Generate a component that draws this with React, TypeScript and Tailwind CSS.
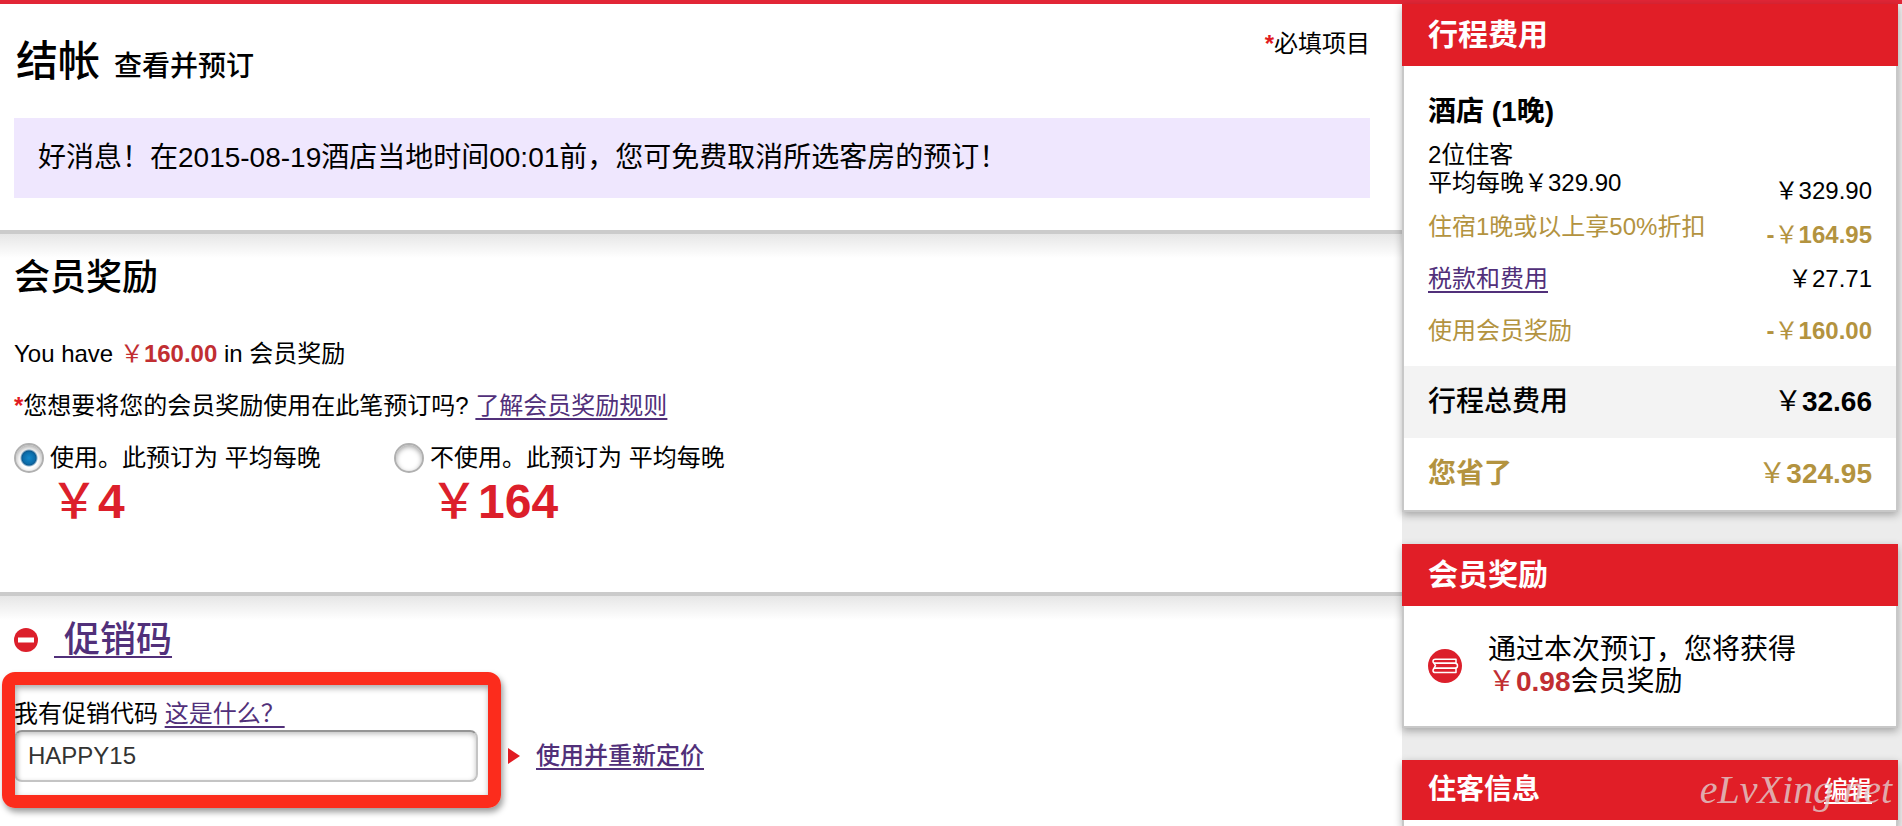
import React from 'react';

const Yen = () => <span className="font-normal">￥</span>;

const Required = () => <span className="font-bold text-[#e11b22]">*</span>;

type SectionProps = {
  children: React.ReactNode;
};

const Section: React.FC<SectionProps> = ({ children }) => (
  <section className="border-t-4 border-[#cbcbcb]">
    <div className="bg-linear-to-b from-[#e6e6e6] to-white to-[24px] px-3.5">{children}</div>
  </section>
);

type CardProps = {
  title: string;
  action?: React.ReactNode;
  className?: string;
  children?: React.ReactNode;
};

const Card: React.FC<CardProps> = ({ title, action, className = '', children }) => (
  <section className={`flex flex-col shadow-[0_3px_8px_rgba(0,0,0,0.3)] ${className}`}>
    {action ? (
      <header className="relative flex items-center justify-between bg-[#e11e27] h-[60px] px-[26px] text-white">
        <h2 className="text-[28px] leading-8 font-bold">{title}</h2>
        {action}
      </header>
    ) : (
      <header className="flex items-center bg-[#e11e27] h-[62px] px-[26px] text-white">
        <h2 className="text-[30px] leading-9 font-bold">{title}</h2>
      </header>
    )}
    <div className={`flex-1 bg-white border-x-2 border-[#c8c8c8] ${children ? 'border-b-2' : ''}`}>{children}</div>
  </section>
);

type RewardOptionProps = {
  id: string;
  label: string;
  price: string;
  checked?: boolean;
};

const RewardOption: React.FC<RewardOptionProps> = ({ id, label, price, checked }) => (
  <div className="w-[380px]">
    <div className="flex items-center gap-1.5">
      <input
        id={id}
        type="radio"
        name="reward"
        defaultChecked={checked}
        className="appearance-none size-[30px] shrink-0 rounded-full border-2 border-[#b0b0b0] bg-white shadow-[inset_0_2px_5px_rgba(0,0,0,0.35)] checked:bg-[radial-gradient(circle,#1489cb_0,#0b6ba8_6px,#0a5a92_7px,transparent_9px)]"
      />
      <label htmlFor={id} className="whitespace-nowrap">{label}</label>
    </div>
    <p className="pl-9 text-5xl leading-[56px] font-bold text-[#dc1f2b]">
      <span className="font-medium">￥</span>{price}
    </p>
  </div>
);

const Checkout = () => (
  <main className="flex-1 min-w-0 bg-white">
    <div className="px-3.5 pr-8 pb-8">
      <div className="flex justify-between items-start pt-6">
        <h1 className="flex items-baseline gap-3.5 pt-2.5 pl-0.5 text-[42px] leading-[48px] font-medium">
          结帐 <span className="text-[28px]">查看并预订</span>
        </h1>
        <p className="leading-8"><Required />必填项目</p>
      </div>
      <p className="mt-[27px] bg-[#efe7fe] px-6 py-6 text-[28px] leading-8">
        好消息！在2015-08-19酒店当地时间00:01前，您可免费取消所选客房的预订！
      </p>
    </div>

    <Section>
      <h2 className="pt-5 text-4xl leading-[48px] font-medium">会员奖励</h2>
      <p className="mt-9 leading-8">
        You have <span className="font-bold text-[#c12e32]"><Yen />160.00</span> in 会员奖励
      </p>
      <p className="mt-5 leading-8">
        <Required />您想要将您的会员奖励使用在此笔预订吗?{' '}
        <a href="#rules" className="text-[#51307a] underline underline-offset-4 decoration-2">了解会员奖励规则</a>
      </p>
      <div className="flex mt-5 pb-[62px]">
        <RewardOption id="use" label="使用。此预订为 平均每晚" price="4" checked />
        <RewardOption id="skip" label="不使用。此预订为 平均每晚" price="164" />
      </div>
    </Section>

    <Section>
      <div className="flex items-center pt-5 gap-4">
        <svg className="size-6" viewBox="0 0 24 24" aria-hidden="true">
          <circle cx="12" cy="12" r="12" fill="#dc1f2b" />
          <rect x="4" y="9.500" width="16" height="5" fill="#fff" />
        </svg>
        <h2 className="text-4xl leading-[48px] font-medium">
          <a href="#promo" className="whitespace-pre text-[#51307a] underline underline-offset-4 decoration-2"> 促销码</a>
        </h2>
      </div>
      <div className="relative mt-[34px]">
        <p className="leading-8">
          <label htmlFor="promo-code">我有促销代码</label>{' '}
          <a href="#what" className="text-[#51307a] underline underline-offset-4 decoration-2">这是什么？</a>
        </p>
        <div className="flex items-center">
          <input
            id="promo-code"
            type="text"
            defaultValue="HAPPY15"
            className="w-[464px] h-[52px] px-3 rounded-lg border-2 border-[#c4c4c4] border-t-[#959595] text-[#333] shadow-[inset_0_2px_5px_rgba(0,0,0,0.25)]"
          />
          <svg className="ml-[30px] w-3 h-4" viewBox="0 0 12 16" aria-hidden="true">
            <path d="M0 0L12 8L0 16Z" fill="#e11b22" />
          </svg>
          <a href="#reprice" className="ml-4 font-medium text-[#51307a] underline underline-offset-4 decoration-2">使用并重新定价</a>
        </div>
        {/* Highlight frame around the promo code field */}
        <div className="absolute -left-3 -top-[26px] w-[499px] h-[136px] rounded-[13px] border-[13px] border-[#fc2c1c] shadow-[2px_4px_6px_rgba(0,0,0,0.4),inset_1px_3px_6px_rgba(0,0,0,0.35)] pointer-events-none" />
      </div>
    </Section>
  </main>
);

const TripCost = () => (
  <table className="w-full text-left">
    <tbody className="align-top">
      <tr className="h-[75px]">
        <th colSpan={2} className="pl-6 pt-[30px] text-[28px] leading-8 font-bold">酒店 (1晚)</th>
      </tr>
      <tr className="h-16">
        <td className="pl-6 leading-7">2位住客<br />平均每晚<Yen />329.90</td>
        <td className="pr-6 leading-7 text-right align-bottom"><Yen />329.90</td>
      </tr>
      <tr className="h-12 text-[#b3933f]">
        <td className="pl-6 pt-2 leading-7">住宿1晚或以上享50%折扣</td>
        <td className="pr-6 pt-4 leading-7 text-right font-bold">-<Yen />164.95</td>
      </tr>
      <tr className="h-[52px]">
        <td className="pl-6 pt-3 leading-7">
          <a href="#taxes" className="text-[#51307a] underline underline-offset-4 decoration-2">税款和费用</a>
        </td>
        <td className="pr-6 pt-3 leading-7 text-right"><Yen />27.71</td>
      </tr>
      <tr className="h-[61px] text-[#b3933f]">
        <td className="pl-6 pt-3 leading-7">使用会员奖励</td>
        <td className="pr-6 pt-3 leading-7 text-right font-bold">-<Yen />160.00</td>
      </tr>
    </tbody>
    <tfoot className="text-[28px] leading-8">
      <tr className="h-[72px] bg-[#f3f3f3]">
        <th className="pl-6 font-medium">行程总费用</th>
        <td className="pr-6 text-right font-bold"><Yen />32.66</td>
      </tr>
      <tr className="h-[72px] text-[#b3933f]">
        <th className="pl-6 font-bold">您省了</th>
        <td className="pr-6 text-right font-bold"><Yen />324.95</td>
      </tr>
    </tfoot>
  </table>
);

const Sidebar = () => (
  <aside className="w-[500px] shrink-0 flex flex-col gap-8 bg-[#ececec] pr-1">
    <Card title="行程费用">
      <TripCost />
    </Card>

    <Card title="会员奖励">
      <div className="flex items-center gap-[26px] px-6 py-7">
        <svg className="size-[34px] shrink-0" viewBox="0 0 34 34" fill="none" aria-hidden="true">
          <circle cx="17" cy="17" r="17" fill="#dc1f2b" />
          <g stroke="#fff" strokeWidth="1.500" strokeLinejoin="round">
            <path d="M28 10.200H7.500Q5 10.200 5 12.200T7.500 14.200H28Z" />
            <path d="M6 14.200H27Q29.500 14.200 29.500 16.700T27 19.200H6L7.500 16.700Z" />
            <path d="M28 19.200H7.500Q5 19.200 5 21.400T7.500 23.600H28Z" />
          </g>
        </svg>
        <p className="text-[28px] leading-8">
          通过本次预订，您将获得<br />
          <span className="font-bold text-[#c12e32]"><Yen />0.98</span>会员奖励
        </p>
      </div>
    </Card>

    <Card
      title="住客信息"
      className="flex-1"
      action={
        <>
          <a href="#edit" className="font-medium underline underline-offset-4 decoration-2">编辑</a>
          <span className="absolute right-1.5 top-2 font-['Liberation_Serif',serif] italic text-[40px] leading-[44px] text-[#e0d0d0]/80 pointer-events-none">
            eLvXing.net
          </span>
        </>
      }
    />
  </aside>
);

export default function App() {
  return (
    <div
      lang="zh-CN"
      className="min-h-screen flex flex-col bg-white text-black text-2xl font-['Liberation_Sans','Noto_Sans_CJK_SC',sans-serif]"
    >
      <div className="h-1 bg-[#e22636]" />
      <div className="flex flex-1">
        <Checkout />
        <Sidebar />
      </div>
    </div>
  );
}
